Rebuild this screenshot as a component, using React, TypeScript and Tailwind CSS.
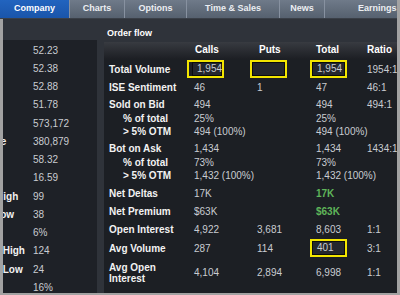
import React from "react";

type LeftRow = {
  value: string;
  label?: string;
  shift?: string;
};

type Cell = {
  text?: string;
  green?: boolean;
  boxed?: boolean;
};

type FlowRow = {
  label: string;
  sub?: boolean;
  height: string;
  calls?: Cell;
  puts?: Cell;
  total?: Cell;
  ratio?: string;
};

const tabs = [
  { name: "Company", width: "w-[69px]", active: true },
  { name: "Charts", width: "w-[55px]" },
  { name: "Options", width: "w-[62px]" },
  { name: "Time & Sales", width: "w-[93px]" },
  { name: "News", width: "w-[45px]" },
];

const leftRows: LeftRow[] = [
  { value: "52.23" },
  { value: "52.38" },
  { value: "52.88" },
  { value: "51.78" },
  { value: "573,172" },
  { value: "380,879", label: "Volume", shift: "-ml-[32px]" },
  { value: "58.32" },
  { value: "16.59" },
  { value: "99", label: "Day High", shift: "-ml-[28px]" },
  { value: "38", label: "Day Low", shift: "-ml-[30px]" },
  { value: "6%" },
  { value: "124", label: "52 Wk High", shift: "-ml-[32px]" },
  { value: "24", label: "52 Wk Low", shift: "-ml-[32px]" },
  { value: "16%" },
];

const flowRows: FlowRow[] = [
  {
    label: "Total Volume",
    height: "h-[20px]",
    calls: { text: "1,954", boxed: true },
    puts: { boxed: true },
    total: { text: "1,954", boxed: true },
    ratio: "1954:1",
  },
  { label: "ISE Sentiment", height: "h-[17px]", calls: { text: "46" }, puts: { text: "1" }, total: { text: "47" }, ratio: "46:1" },
  { label: "Sold on Bid", height: "h-[16px]", calls: { text: "494" }, total: { text: "494" }, ratio: "494:1" },
  { label: "% of total", sub: true, height: "h-[13px]", calls: { text: "25%" }, total: { text: "25%" } },
  { label: "> 5% OTM", sub: true, height: "h-[15px] pb-[3px]", calls: { text: "494 (100%)" }, total: { text: "494 (100%)" } },
  { label: "Bot on Ask", height: "h-[16px]", calls: { text: "1,434" }, total: { text: "1,434" }, ratio: "1434:1" },
  { label: "% of total", sub: true, height: "h-[13px]", calls: { text: "73%" }, total: { text: "73%" } },
  { label: "> 5% OTM", sub: true, height: "h-[15px] pb-[3px]", calls: { text: "1,432 (100%)" }, total: { text: "1,432 (100%)" } },
  { label: "Net Deltas", height: "h-[18px]", calls: { text: "17K" }, total: { text: "17K", green: true } },
  { label: "Net Premium", height: "h-[18px]", calls: { text: "$63K" }, total: { text: "$63K", green: true } },
  { label: "Open Interest", height: "h-[19px]", calls: { text: "4,922" }, puts: { text: "3,681" }, total: { text: "8,603" }, ratio: "1:1" },
  {
    label: "Avg Volume",
    height: "h-[18px]",
    calls: { text: "287" },
    puts: { text: "114" },
    total: { text: "401", boxed: true },
    ratio: "3:1",
  },
];

function ValueCell({ cell, width, boxShift }: { cell?: Cell; width: string; boxShift: string }) {
  if (!cell) return <div className={`${width} flex-none`} />;
  if (cell.boxed) {
    return (
      <div className={`${width} flex-none flex`}>
        <div className={`${boxShift} h-[18px] w-[37px] flex-none border-2 border-[#f2e500]`}>
          <div className="h-full w-full border border-[#0b0c0e] bg-[#24272d] pl-[4px] leading-[12px] text-[#c9ccd1]">
            {cell.text}
          </div>
        </div>
      </div>
    );
  }
  return (
    <div className={`${width} flex-none whitespace-nowrap ${cell.green ? "text-[#5fb55a] font-bold" : "text-[#c9ccd1]"}`}>
      {cell.text}
    </div>
  );
}

export default function App() {
  return (
    <div className="w-[400px] h-[295px] overflow-hidden bg-[#a2a2a2] pr-[3px] pb-[2px] flex flex-col font-['Liberation_Sans',Arial,sans-serif] text-[10px]">
      {/* tab strip */}
      <div className="h-[19px] flex-none flex overflow-hidden bg-gradient-to-b from-[#6f7a89] to-[#56616f] border-b border-[#3a3f47]">
        {tabs.map((tab, i) => (
          <div
            key={tab.name}
            className={`${tab.width} flex-none flex items-center justify-center text-[9px] font-bold ${
              tab.active
                ? "bg-gradient-to-b from-[#2264bf] to-[#1a55aa] text-white"
                : "text-[#eceef2]"
            } ${i > 0 ? "border-l border-[#8791a0]" : ""}`}
          >
            {tab.name}
          </div>
        ))}
        <div className="flex-1 flex items-center pl-[33px] border-l border-[#8791a0] text-[9px] font-bold text-[#eceef2] whitespace-nowrap overflow-hidden">
          Earnings &amp; Dividends
        </div>
      </div>

      <div className="flex-1 min-h-0 ml-[3px] flex bg-[#2f333a]">
        {/* quote column */}
        <div className="w-[94px] flex-none mt-[21px] pt-[1px] bg-[#1e2127] overflow-hidden">
          {leftRows.map((row) => (
            <div key={row.value} className="h-[18.25px] flex items-center">
              <div className="w-[30px] flex-none flex overflow-hidden">
                {row.label && (
                  <span className={`${row.shift} shrink-0 whitespace-nowrap font-bold text-[#f2f2f2]`}>
                    {row.label}
                  </span>
                )}
              </div>
              <span className="text-[#c9ccd1]">{row.value}</span>
            </div>
          ))}
        </div>

        {/* order flow */}
        <div className="flex-1 ml-[7px] flex flex-col min-w-0">
          <div className="h-[23px] flex-none pl-[3px] pt-[8px] leading-[12px] text-[9px] font-bold text-white">
            Order flow
          </div>
          <div className="flex-1 bg-[#1c1f24] overflow-hidden">
            <div className="h-[17px] pb-[2px] flex items-center pl-[5px] font-bold text-white bg-gradient-to-b from-[#383b41] to-[#1d1f24]">
              <div className="w-[85px] flex-none" />
              <div className="w-[63px] flex-none pl-[1px]">Calls</div>
              <div className="w-[59px] flex-none pl-[2px]">Puts</div>
              <div className="w-[51px] flex-none">Total</div>
              <div className="flex-1">Ratio</div>
            </div>

            {flowRows.map((row, i) => (
              <div key={i} className={`${row.height} flex items-center pl-[5px]`}>
                <div className={`w-[85px] flex-none font-bold text-[#f2f2f2] whitespace-nowrap ${row.sub ? "pl-[14px]" : ""}`}>
                  {row.label}
                </div>
                <ValueCell cell={row.calls} width="w-[63px]" boxShift="-ml-[7px] pl-[3px]" />
                <ValueCell cell={row.puts} width="w-[59px]" boxShift="-ml-[7px]" />
                <ValueCell cell={row.total} width="w-[51px]" boxShift="-ml-[6px]" />
                <div className="flex-1 text-[#c9ccd1]">{row.ratio}</div>
              </div>
            ))}

            <div className="h-[31px] flex items-center pl-[5px]">
              <div className="w-[85px] flex-none font-bold text-[#f2f2f2] leading-[11px]">
                Avg Open
                <br />
                Interest
              </div>
              <div className="w-[63px] flex-none text-[#c9ccd1]">4,104</div>
              <div className="w-[59px] flex-none text-[#c9ccd1]">2,894</div>
              <div className="w-[51px] flex-none text-[#c9ccd1]">6,998</div>
              <div className="flex-1 text-[#c9ccd1]">1:1</div>
            </div>
          </div>
        </div>
      </div>
    </div>
  );
}
